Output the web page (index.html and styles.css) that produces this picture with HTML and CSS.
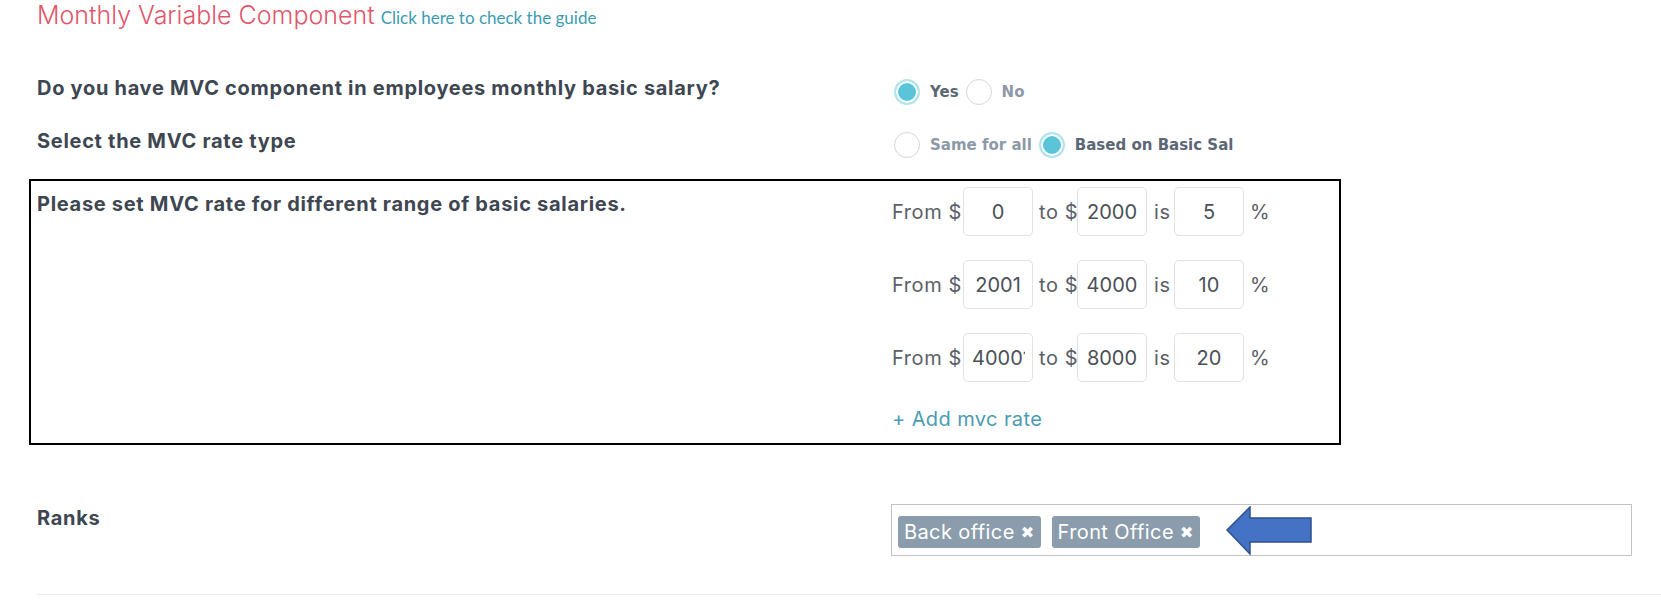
FILE: index.html
```html
<!DOCTYPE html>
<html lang="en">
<head>
    <meta charset="UTF-8">
    <title>Monthly Variable Component</title>
    <link rel="stylesheet" href="styles.css">
</head>
<body>
    <div class="page">
        <div class="heading">
            <span class="heading-title">Monthly Variable Component</span>
            <a class="guide-link" href="#">Click here to check the guide</a>
        </div>

        <div class="field field-first">
            <div class="field-label">Do you have MVC component in employees monthly basic salary?</div>
            <div class="radios">
                <label class="radio checked"><span class="radio-dot"></span>Yes</label>
                <label class="radio"><span class="radio-dot"></span>No</label>
            </div>
        </div>

        <div class="field">
            <div class="field-label">Select the MVC rate type</div>
            <div class="radios">
                <label class="radio"><span class="radio-dot"></span>Same for all</label>
                <label class="radio checked"><span class="radio-dot"></span>Based on Basic Sal</label>
            </div>
        </div>

        <div class="rates-box">
            <div class="field-label">Please set MVC rate for different range of basic salaries.</div>
            <div class="rate-list">
                <div class="rate-row">
                    <span class="rate-from">From $</span>
                    <input class="rate-input" type="text" value="0">
                    <span class="rate-to">to $</span>
                    <input class="rate-input" type="text" value="2000">
                    <span class="rate-is">is</span>
                    <input class="rate-input" type="text" value="5">
                    <span class="rate-pct">%</span>
                </div>
                <div class="rate-row">
                    <span class="rate-from">From $</span>
                    <input class="rate-input" type="text" value="2001">
                    <span class="rate-to">to $</span>
                    <input class="rate-input" type="text" value="4000">
                    <span class="rate-is">is</span>
                    <input class="rate-input" type="text" value="10">
                    <span class="rate-pct">%</span>
                </div>
                <div class="rate-row">
                    <span class="rate-from">From $</span>
                    <input class="rate-input rate-long" type="text" value="40001">
                    <span class="rate-to">to $</span>
                    <input class="rate-input" type="text" value="8000">
                    <span class="rate-is">is</span>
                    <input class="rate-input" type="text" value="20">
                    <span class="rate-pct">%</span>
                </div>
                <a class="add-rate" href="#">+ Add mvc rate</a>
            </div>
        </div>

        <div class="field field-ranks">
            <div class="field-label">Ranks</div>
            <div class="ranks-box">
                <span class="tag">Back office <span class="tag-x">&#10006;</span></span>
                <span class="tag">Front Office <span class="tag-x">&#10006;</span></span>
                <svg class="arrow" width="86" height="49" viewBox="0 0 86 49">
                    <polygon points="1,24 24,1 24,12 85,12 85,36 24,36 24,48" fill="#4472c4" stroke="#2f528f" stroke-width="1.5"/>
                </svg>
            </div>
        </div>

        <div class="divider"></div>
    </div>
</body>
</html>
```

FILE: styles.css
```css
* {
    margin: 0;
    padding: 0;
    box-sizing: border-box;
}

body {
    background-color: #ffffff;
    color: #3e4652;
    font-family: Inter, "Noto Sans", sans-serif;
}

.page {
    padding-left: 37px;
}

.heading {
    display: flex;
    align-items: baseline;
    gap: 6px;
    height: 32px;
    line-height: 30px;
}

.heading-title {
    font-size: 25px;
    font-weight: 300;
    color: #e2566c;
}

.guide-link {
    font-family: Lato, sans-serif;
    font-size: 17px;
    color: #3a9cb4;
    text-decoration: none;
}

.field {
    display: flex;
    margin-top: 24px;
}

.field-first {
    margin-top: 44px;
}

.field-label {
    width: 854px;
    flex-shrink: 0;
    font-size: 20px;
    font-weight: 700;
    letter-spacing: 0.7px;
    line-height: 24px;
}

/* radio groups */
.radios {
    display: flex;
    align-items: center;
    gap: 7px;
    padding: 3px 0 0 3px;
    font-family: "DejaVu Sans", sans-serif;
    font-size: 15px;
    font-weight: bold;
    color: #8d99a6;
}

.radio {
    display: flex;
    align-items: center;
}

.radio.checked {
    color: #5c6776;
}

.radio-dot {
    width: 26px;
    height: 26px;
    margin-right: 10px;
    border: 1.5px solid #d3d7db;
    border-radius: 50%;
    background: #fff;
}

.radio.checked .radio-dot {
    border: 2px solid #b3e5ef;
    background: #5ac5da;
    box-shadow: inset 0 0 0 2px #ffffff;
}

/* rate ranges */
.rates-box {
    display: flex;
    width: 1312px;
    margin: 21px 0 0 -8px;
    padding: 6px 0 12px 6px;
    border: 2px solid #000;
}

.rates-box .field-label {
    padding-top: 5px;
}

.rate-list {
    display: flex;
    flex-direction: column;
    gap: 24px;
}

.rate-row {
    display: flex;
    align-items: center;
    height: 49px;
    font-size: 20px;
    letter-spacing: 0.6px;
    color: #5b6068;
}

.rate-from {
    width: 72px;
    padding-left: 1px;
    white-space: nowrap;
}

.rate-to {
    width: 44px;
    padding-left: 6px;
    white-space: nowrap;
}

.rate-is {
    width: 27px;
    padding-left: 7px;
}

.rate-pct {
    padding-left: 6px;
}

.rate-input {
    width: 70px;
    height: 49px;
    padding: 0 5px;
    border: 1px solid #e0e2e4;
    border-radius: 5px;
    font: inherit;
    color: #4b5057;
    text-align: center;
    outline: none;
}

/* value wider than the box, shows clipped like the live form */
.rate-long {
    padding: 0 7px 0 8px;
    text-align: left;
}

.add-rate {
    margin-top: 1px;
    padding-left: 1px;
    font-size: 20px;
    letter-spacing: 0.4px;
    line-height: 24px;
    color: #4a9bb3;
    text-decoration: none;
}

/* ranks */
.field-ranks {
    margin-top: 59px;
}

.field-ranks .field-label {
    padding-top: 2px;
}

.ranks-box {
    display: flex;
    align-items: flex-start;
    gap: 11px;
    width: 741px;
    height: 52px;
    padding: 11px 6px 0;
    border: 1px solid #c2c2c2;
}

.tag {
    height: 32px;
    padding: 0 6px;
    border-radius: 3px;
    background-color: #8b9cac;
    color: #ffffff;
    font-size: 20px;
    letter-spacing: 0.4px;
    line-height: 32px;
    white-space: nowrap;
}

.tag-x {
    font-family: "DejaVu Sans", sans-serif;
    font-size: 16px;
    vertical-align: 1px;
}

.arrow {
    margin: -10px 0 0 15px;
}

.divider {
    margin-top: 38px;
    border-top: 1px solid #ebebeb;
}
```
